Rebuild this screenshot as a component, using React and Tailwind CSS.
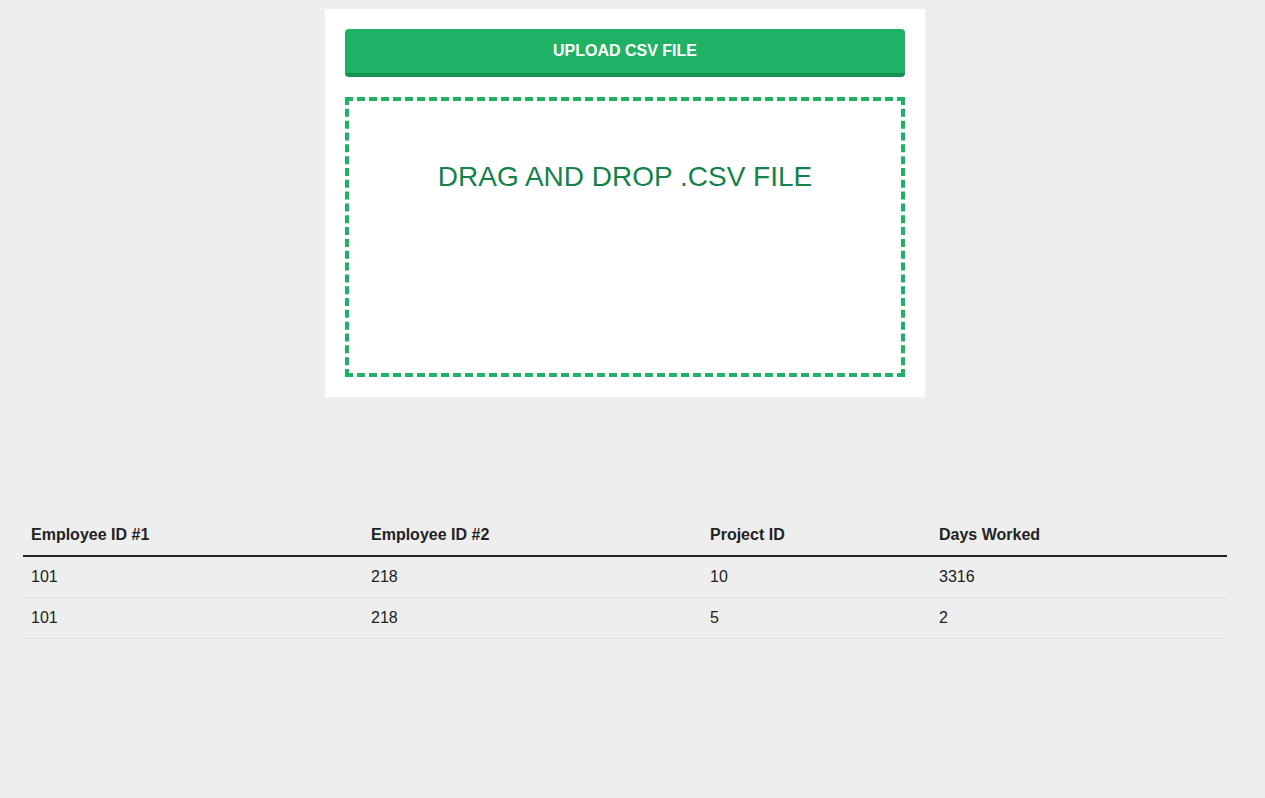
import React from 'react';

const rows = [
    { a: '101', b: '218', p: '10', d: '3316' },
    { a: '101', b: '218', p: '5', d: '2' },
];

function App() {
    return (
        <div className="min-h-screen bg-[#eeeeee] font-['Liberation_Sans',Arial,sans-serif] text-[#222222]">
            <div className="w-[1250px] pt-[9px]">
                {/* Upload card */}
                <div className="mx-auto w-[600px] bg-white p-5">
                    <button
                        type="button"
                        className="w-full h-12 rounded-[4px] bg-[#1fb264] border-b-4 border-[#15924f] text-white font-bold text-base leading-none flex items-center justify-center"
                    >
                        UPLOAD CSV FILE
                    </button>
                    <div className="mt-5 h-[280px] border-4 border-dashed border-[#1fb264] flex justify-center">
                        <h3 className="mt-[60px] text-[28px] leading-[32px] text-[#15824b]">DRAG AND DROP .CSV FILE</h3>
                    </div>
                </div>

                {/* Results */}
                <table className="mt-[118px] ml-[23px] w-[1204px] border-collapse text-base text-left">
                    <thead>
                        <tr className="border-b-2 border-[#222222]">
                            <th className="w-[340px] px-2 py-2 leading-6 font-bold">Employee ID #1</th>
                            <th className="w-[339px] px-2 py-2 leading-6 font-bold">Employee ID #2</th>
                            <th className="w-[229px] px-2 py-2 leading-6 font-bold">Project ID</th>
                            <th className="px-2 py-2 leading-6 font-bold">Days Worked</th>
                        </tr>
                    </thead>
                    <tbody>
                        {rows.map((r, i) => (
                            <tr key={i} className="border-b border-[#dddddd]">
                                <td className="px-2 py-2 leading-6">{r.a}</td>
                                <td className="px-2 py-2 leading-6">{r.b}</td>
                                <td className="px-2 py-2 leading-6">{r.p}</td>
                                <td className="px-2 py-2 leading-6">{r.d}</td>
                            </tr>
                        ))}
                    </tbody>
                </table>
            </div>
        </div>
    );
}

export default App;
